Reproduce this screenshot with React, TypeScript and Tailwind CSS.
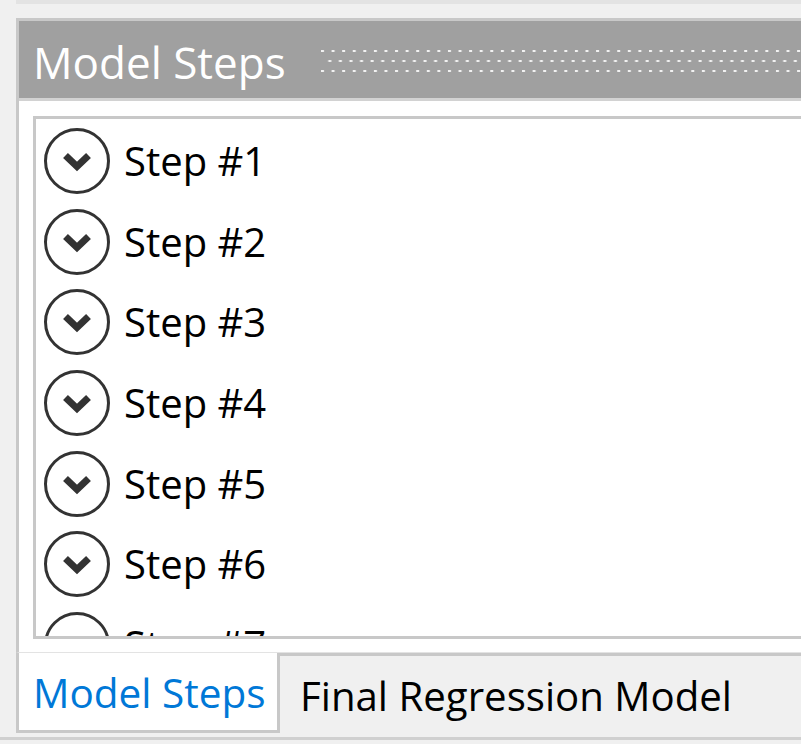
import React from 'react';

const steps = [1, 2, 3, 4, 5, 6, 7];

function ExpandIcon() {
  return (
    <svg width="68" height="68" viewBox="0 0 68 68" className="shrink-0">
      <circle cx="34" cy="34" r="31.5" fill="none" stroke="#333333" strokeWidth="3" />
      <path d="M22.5 28.5 L34 39.5 L45.5 28.5" fill="none" stroke="#333333" strokeWidth="7" strokeLinejoin="miter" strokeLinecap="butt" />
    </svg>
  );
}

function Grip() {
  return (
    <svg width="500" height="22" className="shrink-0">
      <defs>
        <pattern id="grip" x="0" y="0" width="10.58" height="20" patternUnits="userSpaceOnUse">
          <rect x="0" y="0" width="3" height="2" fill="#f2f2f2" />
          <rect x="7.3" y="10" width="3" height="2" fill="#f2f2f2" />
        </pattern>
      </defs>
      <rect x="0" y="0" width="500" height="22" fill="url(#grip)" />
    </svg>
  );
}

export default function App() {
  return (
    <div className="relative w-[801px] h-[744px] bg-[#f0f0f0] overflow-hidden" style={{ fontFamily: '"Open Sans", "Noto Sans", sans-serif' }}>
      <div className="h-[4px] ml-[16px] bg-[#e3e3e3]" />

      <div className="mt-[14px] ml-[16px] w-[900px] border-t-[3px] border-[#c8c8c8]">
        {/* header */}
        <div className="h-[77px] bg-[#a0a0a0] border-l-[3px] border-[#c8c8c8] flex items-center">
          <div className="w-[302px] pl-[14px] text-white text-[44px] leading-none pt-[4px]">Model Steps</div>
          <div className="pt-[3px]">
            <Grip />
          </div>
        </div>
        <div className="h-[3px] bg-[#d2d2d2] border-l-[3px] border-[#c8c8c8]" />

        {/* content */}
        <div className="h-[552px] bg-white border-l-[3px] border-b border-[#c8c8c8] border-b-[#e3e3e3] pt-[15px] pl-[14px]">
          <div className="h-[523px] border-[3px] border-[#c8c8c8] overflow-hidden pt-[2px] pl-[7px]">
            {steps.map((n) => (
              <div key={n} className="h-[80.6px] flex items-center">
                <ExpandIcon />
                <span className="ml-[13px] text-black text-[40px] leading-none">Step #{n}</span>
              </div>
            ))}
          </div>
        </div>

        {/* tabs */}
        <div className="flex items-start">
          <div className="w-[264px] h-[80px] bg-white border-l-[3px] border-r-[3px] border-b-[3px] border-[#c8c8c8] flex items-center pl-[14px] pt-[4px]">
            <span className="text-[#0078d7] text-[40.5px] leading-none">Model Steps</span>
          </div>
          <div className="flex-1 h-[84px] bg-[#f0f0f0] border-t-[3px] border-[#c8c8c8] flex items-center pl-[20px]">
            <span className="text-black text-[40.2px] leading-none">Final Regression Model</span>
          </div>
        </div>
      </div>
      <div className="h-[3px] bg-[#d0d0d0]" />
    </div>
  );
}
